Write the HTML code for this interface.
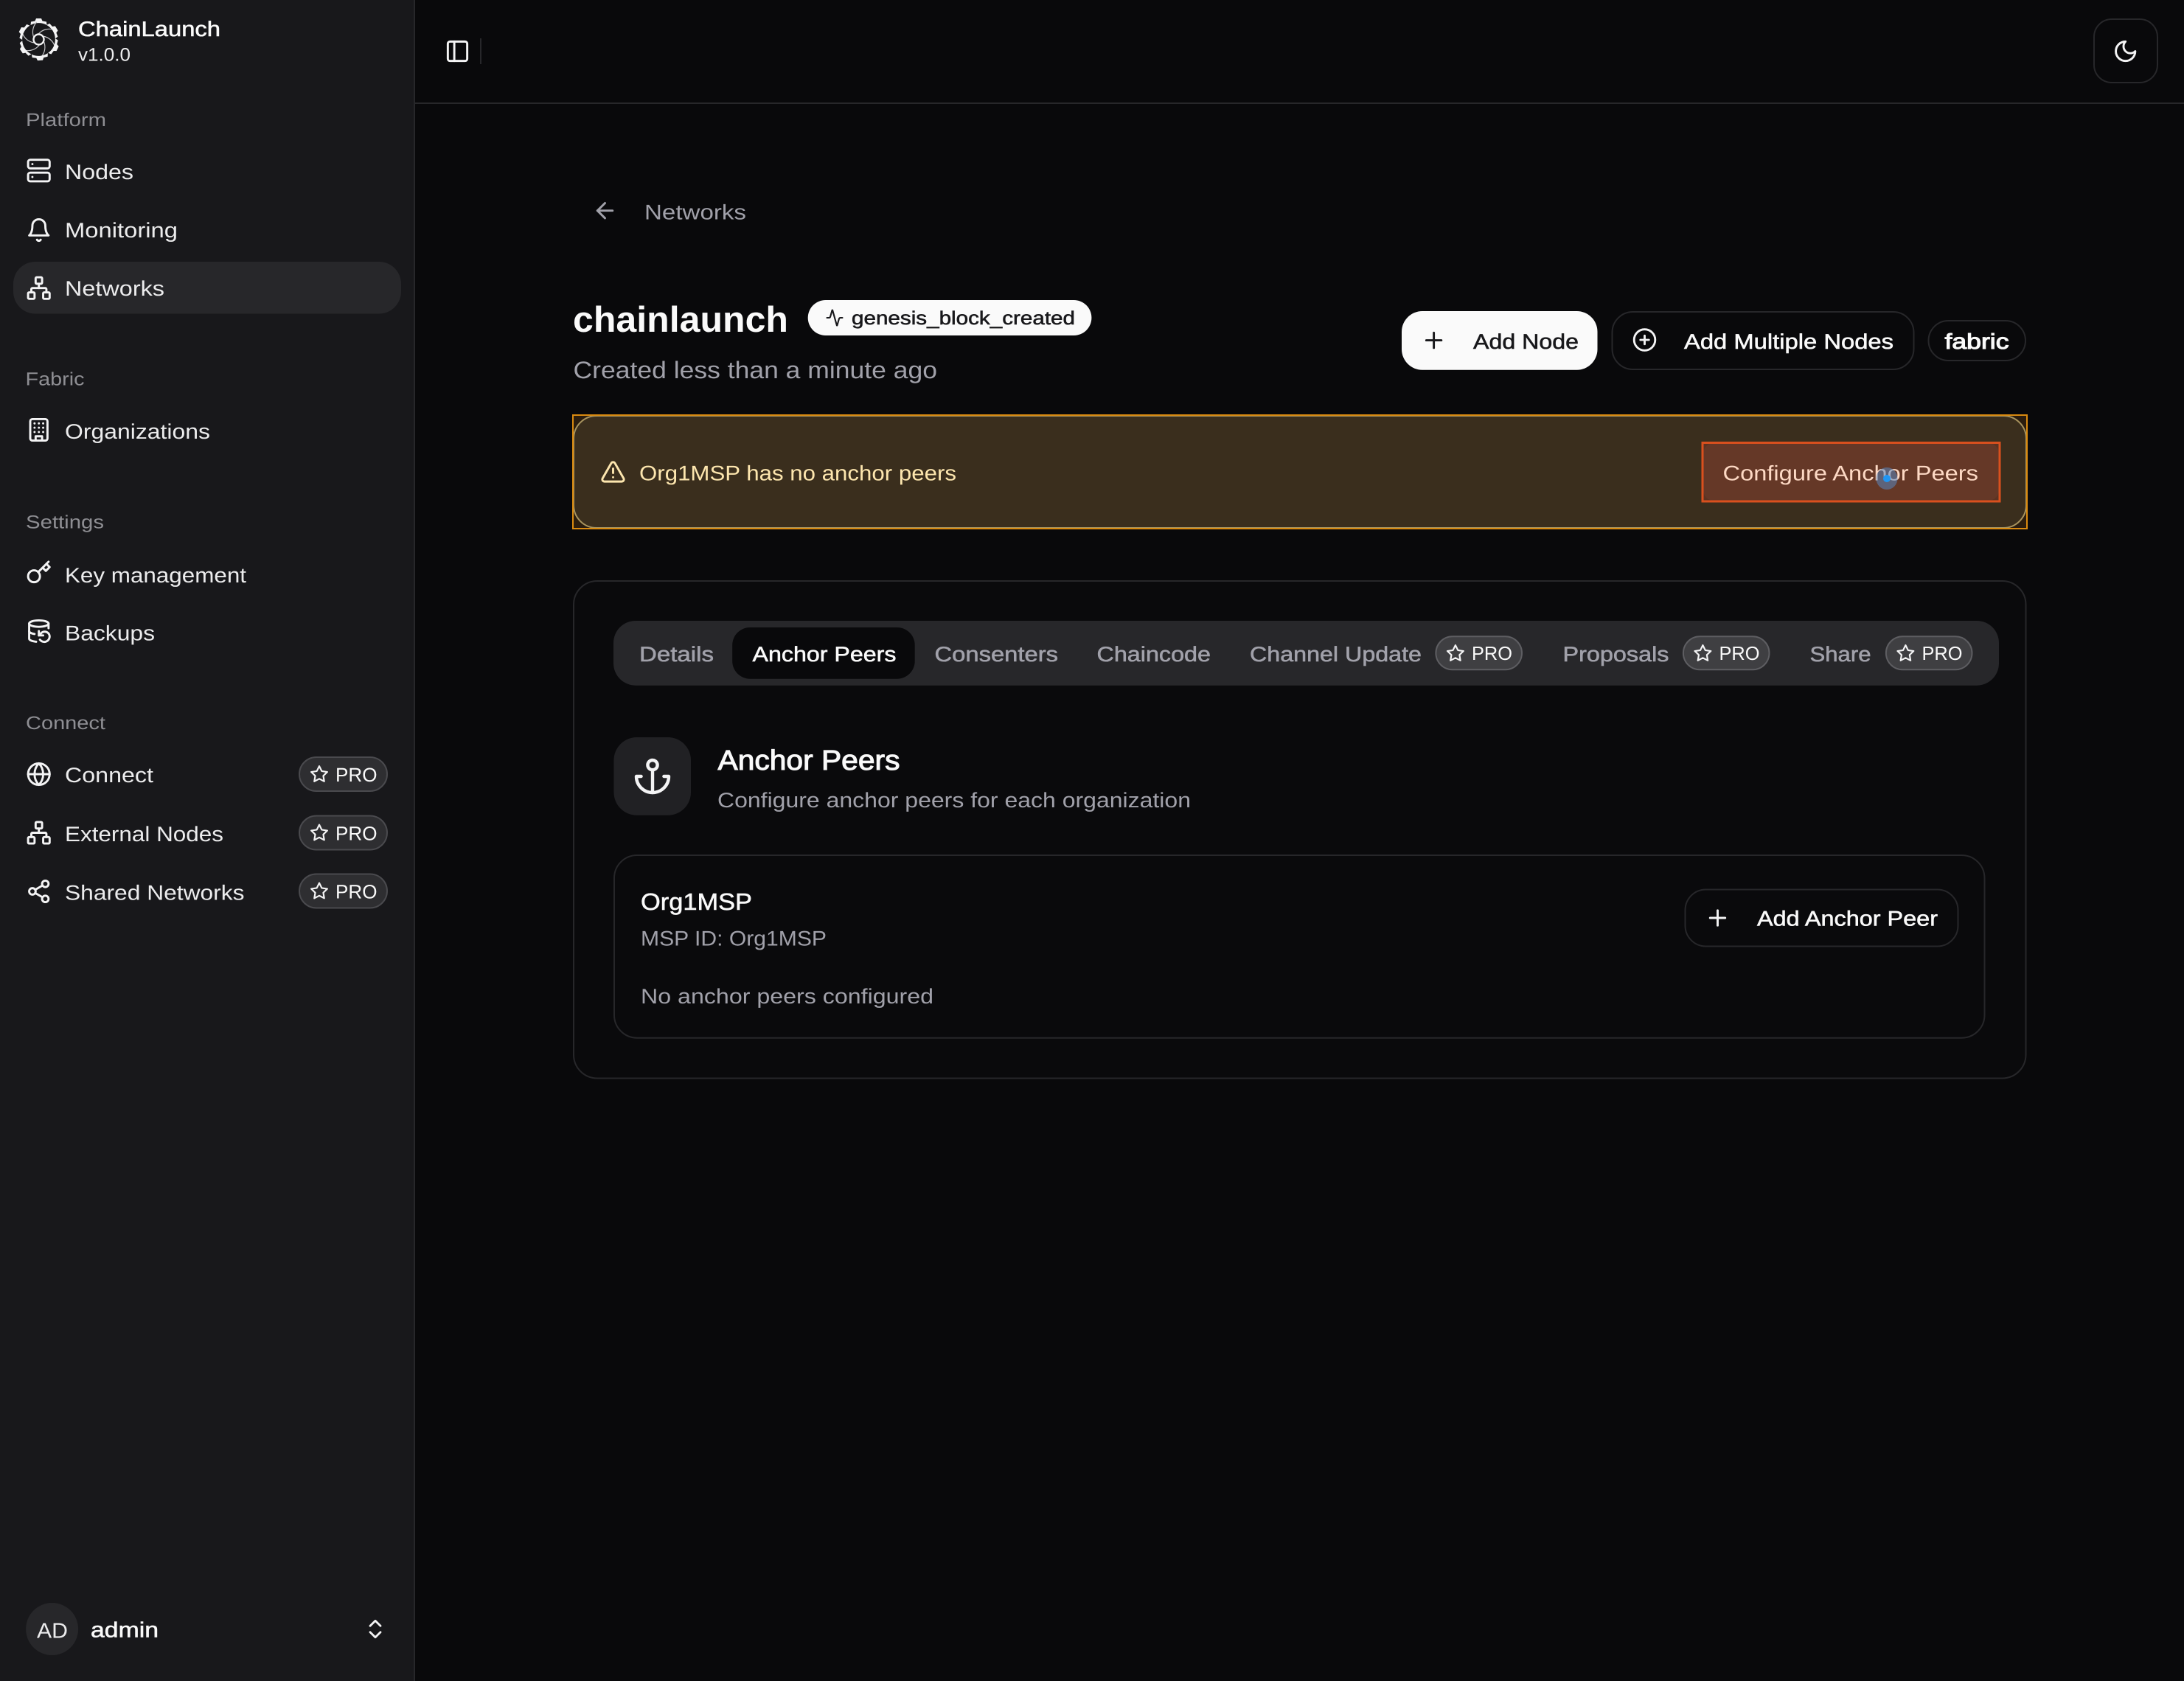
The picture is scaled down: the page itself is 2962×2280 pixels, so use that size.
<!DOCTYPE html>
<html lang="en"><head><meta charset="utf-8"><title>ChainLaunch</title>
<style>
html,body{margin:0;padding:0;background:#09090b;width:2962px;height:2280px;overflow:hidden}
svg.page{display:block}
text{font-family:"Liberation Sans",sans-serif;fill:currentColor;stroke:currentColor;stroke-width:0;text-rendering:geometricPrecision;font-size:28.5px}
.m{stroke-width:.55px}.s{stroke-width:1.05px}
.w{color:#fafafa}.g{color:#a1a1aa}.l{color:#8e8e93}.d{color:#18181b}.n{color:#ececed}
.ic{fill:none;stroke:#f4f4f5;stroke-width:2;stroke-linecap:round;stroke-linejoin:round}
</style></head><body>
<svg class="page" xmlns="http://www.w3.org/2000/svg" width="2962" height="2280" viewBox="0 0 2962 2280">
<defs>
<g id="server"><rect x="2" y="2" width="20" height="8" rx="2"/><rect x="2" y="14" width="20" height="8" rx="2"/><path d="M6 6h.01M6 18h.01"/></g>
<g id="bell"><path d="M6 8a6 6 0 0 1 12 0c0 7 3 9 3 9H3s3-2 3-9"/><path d="M10.3 21a1.94 1.94 0 0 0 3.4 0"/></g>
<g id="network"><rect x="16" y="16" width="6" height="6" rx="1"/><rect x="2" y="16" width="6" height="6" rx="1"/><rect x="9" y="2" width="6" height="6" rx="1"/><path d="M5 16v-3a1 1 0 0 1 1-1h12a1 1 0 0 1 1 1v3"/><path d="M12 12V8"/></g>
<g id="building"><rect x="4" y="2" width="16" height="20" rx="2"/><path d="M9 22v-4h6v4"/><path d="M8 6h.01M16 6h.01M12 6h.01M12 10h.01M12 14h.01M16 10h.01M16 14h.01M8 10h.01M8 14h.01"/></g>
<g id="key"><circle cx="7.5" cy="15.5" r="5.5"/><path d="m21 2-9.6 9.6"/><path d="m15.5 7.5 3 3L22 7l-3-3"/></g>
<g id="dbb"><ellipse cx="12" cy="5" rx="9" ry="3"/><path d="M3 12a9 3 0 0 0 5 2.69"/><path d="M21 9.3V5"/><path d="M3 5v14a9 3 0 0 0 6.47 2.88"/><path d="M12 12v4h4"/><path d="M13 20a5 5 0 0 0 9-3 4.5 4.5 0 0 0-4.5-4.5c-1.33 0-2.54.54-3.41 1.41L12 16"/></g>
<g id="globe"><circle cx="12" cy="12" r="10"/><path d="M12 2a14.5 14.5 0 0 0 0 20 14.5 14.5 0 0 0 0-20"/><path d="M2 12h20"/></g>
<g id="share"><circle cx="18" cy="5" r="3"/><circle cx="6" cy="12" r="3"/><circle cx="18" cy="19" r="3"/><path d="M8.59 13.51 15.42 17.49M15.41 6.51 8.59 10.49"/></g>
<g id="star"><polygon points="12 2 15.09 8.26 22 9.27 17 14.14 18.18 21.02 12 17.77 5.82 21.02 7 14.14 2 9.27 8.91 8.26"/></g>
<g id="panel"><rect x="3" y="3" width="18" height="18" rx="2"/><path d="M9 3v18"/></g>
<g id="moon"><path d="M12 3a6 6 0 0 0 9 9 9 9 0 1 1-9-9Z"/></g>
<g id="arrow"><path d="m12 19-7-7 7-7"/><path d="M19 12H5"/></g>
<g id="activity"><path d="M22 12h-2.48a2 2 0 0 0-1.93 1.46l-2.35 8.36a.25.25 0 0 1-.48 0L9.24 2.18a.25.25 0 0 0-.48 0l-2.35 8.36A2 2 0 0 1 4.49 12H2"/></g>
<g id="plus"><path d="M5 12h14"/><path d="M12 5v14"/></g>
<g id="cplus"><circle cx="12" cy="12" r="10"/><path d="M8 12h8"/><path d="M12 8v8"/></g>
<g id="warn"><path d="m21.73 18-8-14a2 2 0 0 0-3.48 0l-8 14A2 2 0 0 0 4 21h16a2 2 0 0 0 1.73-3"/><path d="M12 9v4"/><path d="M12 17h.01"/></g>
<g id="anchor"><circle cx="12" cy="5" r="3"/><path d="M12 22V8"/><path d="M5 12H2a10 10 0 0 0 20 0h-3"/></g>
<g id="chev"><path d="m7 15 5 5 5-5"/><path d="m7 9 5-5 5 5"/></g>
<g id="seg">
  <path d="M-11-19.5-10.5-24-5-25-3.5-28.5H3.5L5-25 10.5-24 11-19.5A22.5 22.5 0 0 0-11-19.5Z" fill="#f4f4f5"/>
  <path d="M0-8C5-13 12-15.5 19.5-13.5" fill="none" stroke="#c4c4c7" stroke-width="1.2"/>
</g>
</defs>

<rect width="2962" height="2280" fill="#09090b"/>

<!-- sidebar -->
<rect x="0" y="0" width="562" height="2280" fill="#18181b"/>
<rect x="561" y="0" width="2" height="2280" fill="#27272a"/>
<rect x="563" y="139" width="2399" height="2" fill="#27272a"/>

<g transform="translate(52.5 53.5)">
  <use href="#seg"/><use href="#seg" transform="rotate(58)"/><use href="#seg" transform="rotate(116)"/><use href="#seg" transform="rotate(176)"/><use href="#seg" transform="rotate(236)"/><use href="#seg" transform="rotate(298)"/>
  <circle r="7" fill="none" stroke="#f4f4f5" stroke-width="2.4"/>
</g>
<text class="w m" x="106" y="49" style="font-size:28.5px" textLength="193" lengthAdjust="spacingAndGlyphs">ChainLaunch</text>
<text class="n" x="106" y="82.5" style="font-size:25px" textLength="71" lengthAdjust="spacingAndGlyphs">v1.0.0</text>

<text class="l" x="35" y="171" style="font-size:25px" textLength="109" lengthAdjust="spacingAndGlyphs">Platform</text>
<g class="ic"><use href="#server" transform="translate(52.7 231.3) scale(1.46) translate(-12 -12)"/></g>
<text class="n" x="88" y="243" textLength="93" lengthAdjust="spacingAndGlyphs">Nodes</text>
<g class="ic"><use href="#bell" transform="translate(52.7 312) scale(1.46) translate(-12 -12)"/></g>
<text class="n" x="88" y="322" textLength="153" lengthAdjust="spacingAndGlyphs">Monitoring</text>
<rect x="18" y="355" width="526" height="70.5" rx="30" fill="#27272a"/>
<g class="ic"><use href="#network" transform="translate(52.7 390.7) scale(1.46) translate(-12 -12)"/></g>
<text class="n" x="88" y="401" textLength="135" lengthAdjust="spacingAndGlyphs">Networks</text>

<text class="l" x="34.5" y="522.5" style="font-size:25px" textLength="80" lengthAdjust="spacingAndGlyphs">Fabric</text>
<g class="ic"><use href="#building" transform="translate(52.7 583) scale(1.46) translate(-12 -12)"/></g>
<text class="n" x="88" y="595" textLength="197" lengthAdjust="spacingAndGlyphs">Organizations</text>

<text class="l" x="35" y="716.5" style="font-size:25px" textLength="106" lengthAdjust="spacingAndGlyphs">Settings</text>
<g class="ic"><use href="#key" transform="translate(52.7 776.5) scale(1.46) translate(-12 -12)"/></g>
<text class="n" x="88" y="790" textLength="246" lengthAdjust="spacingAndGlyphs">Key management</text>
<g class="ic"><use href="#dbb" transform="translate(52.7 856) scale(1.46) translate(-12 -12)"/></g>
<text class="n" x="88" y="868.5" textLength="122" lengthAdjust="spacingAndGlyphs">Backups</text>

<text class="l" x="35" y="989" style="font-size:25px" textLength="108" lengthAdjust="spacingAndGlyphs">Connect</text>
<g class="ic"><use href="#globe" transform="translate(52.7 1050) scale(1.46) translate(-12 -12)"/></g>
<text class="n" x="88" y="1061" textLength="120" lengthAdjust="spacingAndGlyphs">Connect</text>
<g class="ic"><use href="#network" transform="translate(52.7 1129.5) scale(1.46) translate(-12 -12)"/></g>
<text class="n" x="88" y="1141" textLength="215" lengthAdjust="spacingAndGlyphs">External Nodes</text>
<g class="ic"><use href="#share" transform="translate(52.7 1209) scale(1.46) translate(-12 -12)"/></g>
<text class="n" x="88" y="1220.5" textLength="243.5" lengthAdjust="spacingAndGlyphs">Shared Networks</text>

<g id="b1">
<rect x="406" y="1027" width="119" height="46" rx="23" fill="#2e2e31" stroke="#4a4a4e" stroke-width="2"/>
<g class="ic"><use href="#star" transform="translate(433 1050) scale(1.09) translate(-12 -12)"/></g>
<text class="w" x="455" y="1060" style="font-size:26.5px" textLength="56.5" lengthAdjust="spacingAndGlyphs">PRO</text>
</g>
<use href="#b1" y="79.5"/>
<use href="#b1" y="158.5"/>

<circle cx="70.6" cy="2209.5" r="35.5" fill="#27272a"/>
<text class="n" x="50" y="2221.5" style="font-size:29px" textLength="42" lengthAdjust="spacingAndGlyphs">AD</text>
<text class="w m" x="123" y="2220.5" style="font-size:29px" textLength="92" lengthAdjust="spacingAndGlyphs">admin</text>
<g class="ic"><use href="#chev" transform="translate(509 2209.5) scale(1.4) translate(-12 -12)"/></g>

<!-- header -->
<g class="ic"><use href="#panel" transform="translate(620.5 69.5) scale(1.46) translate(-12 -12)"/></g>
<rect x="651" y="52" width="2" height="35" fill="#27272a"/>
<rect x="2840" y="26" width="86" height="86" rx="24" fill="#09090b" stroke="#27272a" stroke-width="2"/>
<g class="ic"><use href="#moon" transform="translate(2882.7 69.5) scale(1.46) translate(-12 -12)"/></g>

<!-- page head -->
<g class="ic" style="stroke:#a1a1aa"><use href="#arrow" transform="translate(820.5 285.7) scale(1.46) translate(-12 -12)"/></g>
<text class="g" x="874" y="297.5" textLength="138" lengthAdjust="spacingAndGlyphs">Networks</text>

<text class="w" x="777" y="450" style="font-size:49px;font-weight:700" textLength="292" lengthAdjust="spacingAndGlyphs">chainlaunch</text>
<rect x="1095.7" y="407" width="384.7" height="48" rx="24" fill="#fafafa"/>
<g class="ic" style="stroke:#18181b"><use href="#activity" transform="translate(1132 431) scale(1.05) translate(-12 -12)"/></g>
<text class="d m" x="1155" y="440" style="font-size:25.5px" textLength="303" lengthAdjust="spacingAndGlyphs">genesis_block_created</text>
<text class="g" x="777.5" y="513" style="font-size:32.5px" textLength="493.5" lengthAdjust="spacingAndGlyphs">Created less than a minute ago</text>

<rect x="1901" y="422" width="265.5" height="79.7" rx="28" fill="#fafafa"/>
<g class="ic" style="stroke:#18181b"><use href="#plus" transform="translate(1944.6 461.6) scale(1.46) translate(-12 -12)"/></g>
<text class="d m" x="1998" y="473" textLength="143" lengthAdjust="spacingAndGlyphs">Add Node</text>

<rect x="2186.5" y="423" width="409" height="78" rx="28" fill="none" stroke="#27272a" stroke-width="2"/>
<g class="ic"><use href="#cplus" transform="translate(2230.5 461) scale(1.43) translate(-12 -12)"/></g>
<text class="w m" x="2284" y="473" textLength="284" lengthAdjust="spacingAndGlyphs">Add Multiple Nodes</text>

<rect x="2615.5" y="435" width="131.5" height="54" rx="27" fill="none" stroke="#27272a" stroke-width="2"/>
<text class="w s" x="2637.5" y="473" style="font-size:29px" textLength="87" lengthAdjust="spacingAndGlyphs">fabric</text>

<!-- alert -->
<rect x="777" y="563" width="1972" height="154" fill="#2b1d0e"/>
<rect x="778" y="564" width="1970" height="152" rx="31" fill="#3a2e1d" stroke="#a8945f" stroke-width="2"/>
<rect x="777" y="563" width="1972" height="154" fill="none" stroke="#d98a10" stroke-width="2"/>
<g class="ic" style="stroke:#fde6ae"><use href="#warn" transform="translate(831.5 640) scale(1.46) translate(-12 -12)"/></g>
<text x="867" y="651.5" style="color:#fde6ae" textLength="430" lengthAdjust="spacingAndGlyphs">Org1MSP has no anchor peers</text>

<rect x="2309" y="600.5" width="403" height="79.5" fill="#5c3322"/>
<rect x="2310" y="601" width="401" height="78" rx="14" fill="#653827"/>
<rect x="2309" y="600.5" width="403" height="79.5" fill="none" stroke="#d9501e" stroke-width="3"/>
<text x="2336.5" y="651.5" style="color:#fdd9c4" textLength="346.5" lengthAdjust="spacingAndGlyphs">Configure Anchor Peers</text>
<ellipse cx="2559" cy="649" rx="14.5" ry="15" fill="#5a86c0" fill-opacity=".55"/>
<circle cx="2559" cy="649" r="5" fill="#2196f3"/>

<!-- main card -->
<rect x="778" y="788" width="1969.5" height="674.5" rx="32" fill="#0a0a0c" stroke="#27272a" stroke-width="2"/>
<rect x="832" y="842" width="1879" height="87.7" rx="30" fill="#27272a"/>
<rect x="993.2" y="851" width="247.5" height="69.7" rx="24" fill="#09090b"/>
<text class="g m" x="867" y="897" textLength="101" lengthAdjust="spacingAndGlyphs">Details</text>
<text class="w m" x="1020.5" y="897" textLength="195" lengthAdjust="spacingAndGlyphs">Anchor Peers</text>
<text class="g m" x="1267.5" y="897" textLength="167.5" lengthAdjust="spacingAndGlyphs">Consenters</text>
<text class="g m" x="1487.5" y="897" textLength="154.5" lengthAdjust="spacingAndGlyphs">Chaincode</text>
<text class="g m" x="1695" y="897" textLength="233" lengthAdjust="spacingAndGlyphs">Channel Update</text>
<g id="b2">
<rect x="1947.4" y="863.3" width="116.6" height="45" rx="22.5" fill="#3f3f42" stroke="#5e5e62" stroke-width="2"/>
<g class="ic"><use href="#star" transform="translate(1973.9 886) scale(1.09) translate(-12 -12)"/></g>
<text class="w" x="1996" y="895" style="font-size:26px" textLength="55" lengthAdjust="spacingAndGlyphs">PRO</text>
</g>
<text class="g m" x="2119.5" y="897" textLength="144" lengthAdjust="spacingAndGlyphs">Proposals</text>
<use href="#b2" x="335.5"/>
<text class="g m" x="2454.5" y="897" textLength="83" lengthAdjust="spacingAndGlyphs">Share</text>
<use href="#b2" x="610.5"/>

<rect x="832.5" y="1000" width="104.5" height="105.7" rx="31" fill="#212124"/>
<g class="ic"><use href="#anchor" transform="translate(885 1053) scale(2.2) translate(-12 -12)"/></g>
<text class="w s" x="973.5" y="1044" style="font-size:38px" textLength="247" lengthAdjust="spacingAndGlyphs">Anchor Peers</text>
<text class="g" x="973" y="1095" textLength="642" lengthAdjust="spacingAndGlyphs">Configure anchor peers for each organization</text>

<rect x="833" y="1160" width="1858.5" height="247.7" rx="31" fill="none" stroke="#27272a" stroke-width="2"/>
<text class="w m" x="869" y="1234" style="font-size:32px" textLength="151" lengthAdjust="spacingAndGlyphs">Org1MSP</text>
<text class="g" x="869" y="1282.5" textLength="252" lengthAdjust="spacingAndGlyphs">MSP ID: Org1MSP</text>
<text class="g" x="869" y="1361" textLength="397" lengthAdjust="spacingAndGlyphs">No anchor peers configured</text>

<rect x="2285.5" y="1206.5" width="370" height="77" rx="28" fill="none" stroke="#27272a" stroke-width="2"/>
<g class="ic"><use href="#plus" transform="translate(2329.5 1245) scale(1.46) translate(-12 -12)"/></g>
<text class="w m" x="2383" y="1255.5" textLength="245" lengthAdjust="spacingAndGlyphs">Add Anchor Peer</text>
</svg>
</body></html>
